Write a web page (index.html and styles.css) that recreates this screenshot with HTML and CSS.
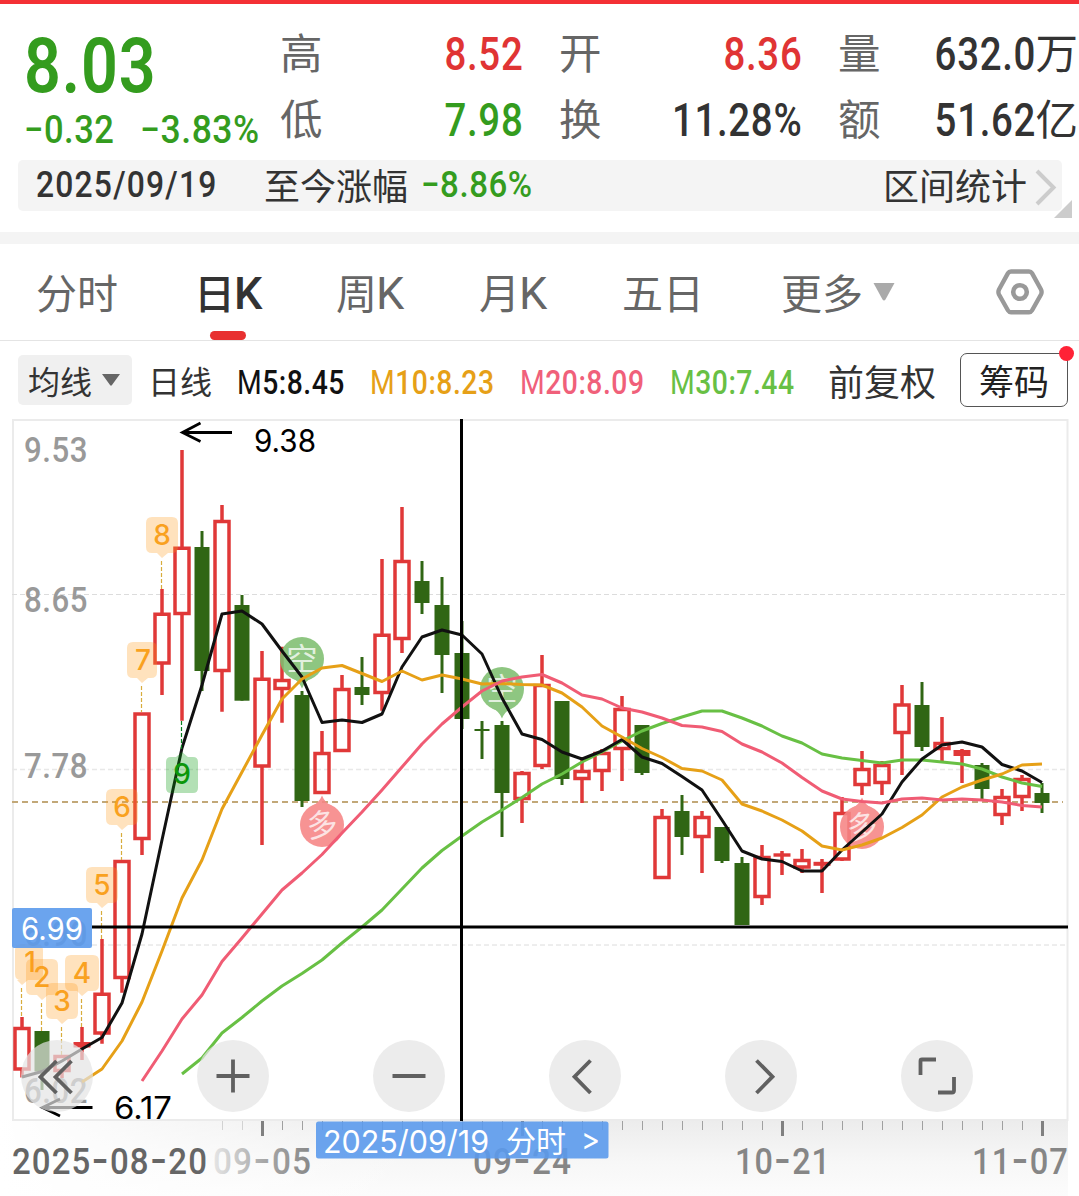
FILE: index.html
```html
<!DOCTYPE html>
<html lang="zh-CN">
<head>
<meta charset="utf-8">
<title>日K</title>
<link rel="stylesheet" href="styles.css">
</head>
<body>
<main class="page">
  <header class="quote">
    <div class="price">
      <div class="last"><span class="num s-last">8.03</span></div>
      <div class="change"><span class="cell c-diff"><span class="num s-diff">−0.32</span></span><span class="num s-pct">−3.83%</span></div>
    </div>
    <dl class="stats">
      <div class="stat"><dt>高</dt><dd class="up"><span class="num">8.52</span></dd></div>
      <div class="stat"><dt>开</dt><dd class="up"><span class="num">8.36</span></dd></div>
      <div class="stat last-col"><dt>量</dt><dd><span class="num">632.0</span><span class="unit">万</span></dd></div>
      <div class="stat"><dt>低</dt><dd class="down"><span class="num">7.98</span></dd></div>
      <div class="stat"><dt>换</dt><dd><span class="num">11.28%</span></dd></div>
      <div class="stat last-col"><dt>额</dt><dd><span class="num">51.62</span><span class="unit">亿</span></dd></div>
    </dl>
  </header>

  <section class="range">
    <span class="cell range-date"><span class="num s-date">2025/09/19</span></span>
    <span class="range-label">至今涨幅</span>
    <span class="num s-range down">−8.86%</span>
    <span class="range-link">区间统计</span>
    <svg class="range-chev" width="24" height="40" viewBox="0 0 24 40"><path d="M2 4 18.500 20.500 2 37" fill="none" stroke="#ccc" stroke-width="4"/></svg>
    <i class="corner"></i>
  </section>

  <nav class="tabs">
    <span class="tab t1">分时</span>
    <span class="tab t2 active">日<b>K</b></span>
    <span class="tab t3">周<b>K</b></span>
    <span class="tab t4">月<b>K</b></span>
    <span class="tab t5">五日</span>
    <span class="tab t6">更多<svg width="24" height="20" viewBox="0 0 24 20"><path d="M1.500 1h21L13.500 17.500q-1.500 2-3 0Z" fill="#aaa"/></svg></span>
    <svg class="gear" width="52" height="50" viewBox="0 0 52 50"><path d="M17 4.500H35Q37 4.500 38 6.200L47 22.500Q48.200 25 47 27.500L38 43.500Q37 45.200 35 45.200H17Q15 45.200 14 43.500L5 27.500Q3.800 25 5 22.500L14 6.200Q15 4.500 17 4.500Z" fill="none" stroke="#999" stroke-width="4.400"/><circle cx="26" cy="25" r="6.800" fill="none" stroke="#999" stroke-width="4.600"/></svg>
  </nav>

  <section class="legend">
    <span class="chip">均线<svg width="20" height="14" viewBox="0 0 20 14"><path d="M1 1h18L11 12q-1 1.500-2 0Z" fill="#666"/></svg></span>
    <span class="period">日线</span>
    <span class="cell ma m5"><span class="num"><i>M</i>5:8.45</span></span>
    <span class="cell ma m10"><span class="num"><i>M</i>10:8.23</span></span>
    <span class="cell ma m20"><span class="num"><i>M</i>20:8.09</span></span>
    <span class="cell ma m30"><span class="num"><i>M</i>30:7.44</span></span>
    <span class="adjust">前复权</span>
    <span class="chips-btn">筹码</span>
  </section>

  <section class="chart">
    <svg id="kline" width="1079" height="777" viewBox="0 419 1079 777">
      <defs>
        <linearGradient id="axisDown" x1="0" y1="0" x2="0" y2="1"><stop offset="0" stop-color="#ececec"/><stop offset=".55" stop-color="#f7f7f7"/><stop offset="1" stop-color="#fcfcfc"/></linearGradient>
        <linearGradient id="axisLeft" x1="0" y1="0" x2="1" y2="0"><stop offset="0" stop-color="#fff"/><stop offset=".25" stop-color="#fff" stop-opacity=".75"/><stop offset="1" stop-color="#fff" stop-opacity="0"/></linearGradient>
        <linearGradient id="dateFade" gradientUnits="userSpaceOnUse" x1="214" y1="0" x2="312" y2="0"><stop offset="0" stop-color="#e4e4e4"/><stop offset=".5" stop-color="#a8a8a8"/><stop offset="1" stop-color="#888"/></linearGradient>
      </defs>
      <rect x="0" y="1120" width="1068" height="76" fill="url(#axisDown)"/>
      <rect x="0" y="1120" width="420" height="76" fill="url(#axisLeft)"/>
      <rect x="13" y="420" width="1054.500" height="700" class="frame"/>
      <path d="M12 594.500H1066M12 945H1066" class="grid"/>
      <path d="M12 769.500H1066" class="grid faint"/>
      <path d="M12 802H1063" class="base"/>
      <g id="candles"></g>
      <g class="ylabels">
        <text x="24" y="462" textLength="64">9.53</text>
        <text x="24" y="612" textLength="64">8.65</text>
        <text x="24" y="778" textLength="64">7.78</text>
        <text x="24" y="946" textLength="64">6.90</text>
        <text x="24" y="1103" textLength="64">6.02</text>
      </g>
      <g id="signals"></g>
      <g id="averages"></g>
      <g id="counts"></g>
      <path d="M182 432.500H232M200.500 423 182.500 432.500 200.500 441.500" class="arrow"/>
      <text x="254" y="451.500" textLength="62" class="mark">9.38</text>
      <path d="M42 1107.500H92.500M60 1099 42.500 1107.500 60 1116" class="arrow"/>
      <text x="114" y="1118.500" textLength="58" class="mark">6.17</text>
      <g id="ticks"></g>
      <g class="dates">
        <text x="12" y="1174" textLength="196" class="first">2025<tspan class="dash">-</tspan>08<tspan class="dash">-</tspan>20</text>
        <text x="213" y="1174" textLength="99" fill="url(#dateFade)">09<tspan class="dash">-</tspan>05</text>
        <text x="473" y="1174" textLength="99">09<tspan class="dash">-</tspan>24</text>
        <text x="735" y="1174" textLength="96">10<tspan class="dash">-</tspan>21</text>
        <text x="972" y="1174" textLength="97">11<tspan class="dash">-</tspan>07</text>
      </g>
      <path d="M461.500 419V1121M92 927H1068" class="cross"/>
      <rect x="12" y="908" width="80" height="40" rx="2" class="tag"/>
      <text x="21" y="939.500" textLength="62" class="tagtext">6.99</text>
      <rect x="316" y="1121.500" width="292.500" height="37" rx="2.500" class="tag"/>
      <text x="323" y="1152.500" textLength="166" class="tagtext">2025/09/19</text>
      <text x="506" y="1152" textLength="60" class="tagtext cjk">分时</text>
      <text x="581" y="1150" textLength="19" class="tagtext">&gt;</text>
    </svg>
    <div class="controls">
      <svg viewBox="0 0 72 72"><path d="M35.500 21 19.500 37 35.500 53M50.500 21 34.500 37 50.500 53"/></svg>
      <svg viewBox="0 0 72 72"><path d="M19.500 36H52.500M36 19.500V52.500"/></svg>
      <svg viewBox="0 0 72 72"><path d="M19.500 36H52.500"/></svg>
      <svg viewBox="0 0 72 72"><path d="M41.500 20.500 25.500 36.700 41.500 53"/></svg>
      <svg viewBox="0 0 72 72"><path d="M31.500 20.500 47.500 36.700 31.500 53"/></svg>
      <svg viewBox="0 0 72 72"><path d="M19.500 35V21Q19.500 19.500 21 19.500H35M37 52.500H51Q53 52.500 53 50.500V37"/></svg>
    </div>
  </section>
</main>
<script src="chart.js"></script>
</body>
</html>
```
FILE: styles.css
```css
* { box-sizing: border-box; margin: 0; padding: 0; }
html, body { background: #fff; overflow: hidden; }
body { font-family: "Noto Sans CJK SC", sans-serif; color: #333; }
i, b { font-style: normal; font-weight: inherit; }
svg { display: block; flex: none; }
.page { width: 1079px; height: 1196px; border-top: 4px solid #f43035; overflow: hidden; }
.num { display: inline-block; font-family: Roboto, sans-serif; font-weight: 500; white-space: nowrap; transform-origin: 0 50%; }
.cell { display: flex; flex: none; white-space: nowrap; }
.up { color: #e03434; }
.down { color: #349c1e; }

.quote { display: flex; height: 156px; padding-top: 17px; }
.price { width: 280px; padding-left: 24px; color: #349c1e; white-space: nowrap; }
.last { display: flex; height: 87px; line-height: 90px; font-size: 76px; }
.change { display: flex; height: 42px; line-height: 44px; font-size: 39px; }
.c-diff { width: 116px; }
.s-last { font-weight: 600; letter-spacing: 1px; transform: scaleX(.85); }
.s-diff { letter-spacing: .6px; transform: scaleX(.885); }
.s-pct { letter-spacing: .6px; transform: scaleX(.91); }
.stats { display: grid; grid-template-columns: 279px 279px 241px; grid-auto-rows: 66px; }
.stat { display: flex; justify-content: space-between; width: 242px; height: 60px; line-height: 60px; font-size: 42.5px; white-space: nowrap; }
.stat dt { color: #666; }
.stat dd { display: flex; }
.stat .num { font-size: 45.5px; line-height: 67px; letter-spacing: .8px; margin-right: -1px; transform: scaleX(.845); transform-origin: 100% 50%; }
.stat.last-col { width: 240px; }

.range { position: relative; display: flex; align-items: center; height: 51px; margin: 0 17px 21px 18px; padding-left: 18px; border-radius: 5px; background: #f4f4f4; font-size: 36px; line-height: 48px; }
.range-date { width: 228px; font-size: 37px; margin-top: -2px; }
.s-date { letter-spacing: 1.4px; transform: scaleX(.86); }
.range-label { width: 157px; margin-top: -3px; }
.s-range { font-size: 36.5px; margin-top: -1px; letter-spacing: .6px; transform: scaleX(.905); }
.range-link { margin: -3px 0 0 auto; }
.range-chev { margin: 2px 3px 0 8px; }
.corner { position: absolute; right: -10px; bottom: -7px; border: 9px solid transparent; border-right-color: #ccc; border-bottom-color: #ccc; }

.tabs { display: flex; align-items: center; height: 109px; border-top: 12px solid #f4f4f4; border-bottom: 1px solid #e4e4e4; padding-left: 36px; font-size: 41px; line-height: 90px; color: #666; white-space: nowrap; }
.tab { position: relative; display: flex; flex: none; align-items: center; height: 96px; padding-bottom: 3px; }
.tab b { font-family: Roboto, sans-serif; font-size: 45px; margin: 6px 0 0 -1px; }
.t1 { width: 158px; } .t2 { width: 142px; } .t3 { width: 143px; } .t4 { width: 143px; } .t5 { width: 159px; } .t6 { width: 213px; }
.tab svg { margin: 3px 0 0 9px; }
.active { color: #333; font-weight: 500; }
.active::after { content: ""; position: absolute; left: 16px; bottom: 0; width: 36px; height: 9px; border-radius: 4.5px; background: #e83030; }

.legend { display: flex; align-items: center; height: 78px; padding-left: 18px; font-size: 32px; line-height: 46px; white-space: nowrap; }
.chip { display: flex; align-items: center; gap: 9px; width: 114px; height: 50px; padding-left: 10px; border-radius: 5px; background: #f0f0f0; }
.period { width: 89px; padding-left: 16px; }
.ma { font-size: 33px; padding: 5px 0 0 1px; }
.ma .num { letter-spacing: .6px; transform: scaleX(.857); }
.ma i { font-weight: 400; }
.m5 { width: 133px; margin-left: 15px; color: #111; }
.m10 { width: 150px; color: #e6a017; }
.m20 { width: 150px; color: #f0607a; }
.m30 { width: 159px; color: #68c044; }
.adjust { width: 132px; font-size: 36px; }
.chips-btn { position: relative; width: 108px; height: 54px; border: 1.5px solid #555; border-radius: 7px; font-size: 35px; line-height: 52px; text-align: center; color: #222; }
.chips-btn::after { content: ""; position: absolute; top: -8px; right: -7px; width: 15px; height: 15px; border-radius: 50%; background: #ff2236; }

.chart { position: relative; height: 777px; }
.controls { position: absolute; left: 21px; top: 621px; display: flex; gap: 104px; }
.controls svg { width: 72px; height: 72px; border-radius: 50%; background: rgba(228, 228, 228, .7); fill: none; stroke: #606060; stroke-width: 3.8; }
.frame { fill: none; stroke: #ebebeb; stroke-width: 2; }
.grid { fill: none; stroke: #dcdcdc; stroke-width: 1; stroke-dasharray: 5 3; }
.faint { stroke: #e8e8e8; stroke-width: 1.5; }
.base { fill: none; stroke: #c2a878; stroke-width: 2; stroke-dasharray: 6 4; }
.ylabels text { font: 500 35.5px Roboto, sans-serif; letter-spacing: .6px; fill: #999; }
text { white-space: pre; }
.mark { font: 400 30.5px Inter, sans-serif; fill: #000; }
.tagtext { font: 400 31px Inter, sans-serif; fill: #fff; }
.tagtext.cjk { font: 400 30px "Noto Sans CJK SC", sans-serif; }
.dates text { font: 500 36.5px Roboto, sans-serif; letter-spacing: 1.2px; }
.dates { fill: #868686; }
.dates .first { fill: #666; }
.dates .dash { font-family: Inter, sans-serif; font-size: 42px; baseline-shift: 0; }
.arrow { fill: none; stroke: #000; stroke-width: 2.8; }
.cross { fill: none; stroke: #000; stroke-width: 3; }
.tag { fill: #5b9aec; fill-opacity: .9; }
.tick { stroke: #a0a0a0; stroke-width: 1; }
.tick.major { stroke: #808080; stroke-width: 3; }
.rise { fill: none; stroke: #e03838; stroke-width: 3.5; }
.fall { fill: #306614; stroke: none; }
.fall-wick { stroke: #306614; stroke-width: 3; }
.avg { fill: none; stroke-width: 3; stroke-linejoin: round; }
.count { fill: #ff9c1c; fill-opacity: .29; }
.count-num { font: 500 28px Inter, sans-serif; fill: #f9a11f; text-anchor: middle; }
.count.green { fill: #0a9c10; fill-opacity: .31; }
.count-num.green { fill: #0a960a; }
.pole { fill: none; stroke: #d8ac3c; stroke-width: 1.2; stroke-dasharray: 4 2; }
.pole.green { stroke: #0a8020; }
.sig text { font: 400 31px "Noto Sans CJK SC", sans-serif; fill: #fff; fill-opacity: .75; text-anchor: middle; }
.sig { opacity: .88; }
.sig .short { fill: #7fbf70; }
.sig .long { fill: #f68585; }
```
FILE: chart.js
```js
const NS = 'http://www.w3.org/2000/svg';
const STEP = 20, FIRST = 22;

function add(parent, tag, attrs, text) {
  const el = document.createElementNS(NS, tag);
  for (const k in attrs) el.setAttribute(k, attrs[k]);
  if (text) el.textContent = text;
  parent.appendChild(el);
  return el;
}
const layer = id => document.getElementById(id);

// direction, high, body top, body bottom, low (chart units)
const candles = [
  ['r',1017,1027,1070.5,1077.5],['g',1031,1031,1071.5,1090],['r',1055,1055,1072,1078],['r',1027,1042,1047.5,1060],
  ['r',939,992.7,1034.7,1043.7],['r',860,860,979,992.7],['r',712.3,712.3,840,855],['r',589,612.7,664.7,695],
  ['r',450,546.7,615,720.7],['g',531,547,671,691],['r',505,520,672,711.7],['g',595,605,700.7,700.7],
  ['r',651,677.7,767.7,845],['r',646.7,679,690,722.7],['g',691,695,801,807],['r',731,752,794,794],
  ['r',675,688,752,752],['g',657,687,695,705],['r',559,633.7,694,710.7],['r',507,560,640,653],
  ['g',561,581,603,614],['g',577,605,655,693],['g',621,653,719,729],['g',721,729,731,759],
  ['g',721,725,793,837],['r',771,772,800,823],['r',655,684,767,769],['g',701,701,779,785],
  ['r',757,770,780,803],['r',749,752,772,791],['r',696,708,750,781],['g',725,725,773,775],
  ['r',809,816,879,879],['g',795,811,837,855],['r',811,816,838,873],['g',827,827,861,863],
  ['g',857,863,925,925],['r',845,856,898,905],['r',851,853.3,856.7,875],['r',849,859,868.5,873],
  ['r',859,861.8,865.8,893],['r',797,812,860.5,861],['r',751,768,786,795],['r',761,764,784,795],
  ['r',685,703.5,734,775],['g',682,705,747,751],['r',717,742,750,761],['r',749,750,756,783],
  ['g',763,765,789,799],['r',789,796,816,825],['r',775,778,798,811],['g',783,793,803,813]
];
candles.forEach(([dir, hi, top, bot, lo], i) => {
  const x = FIRST + STEP * i, g = layer('candles');
  if (dir === 'g') {
    add(g, 'path', { class: 'fall-wick', d: `M${x} ${hi}V${lo}` });
    add(g, 'rect', { class: 'fall', x: x - 7.5, y: top, width: 15, height: bot - top });
    return;
  }
  let d = `M${x} ${hi}V${top + 1}M${x} ${bot - 1}V${lo}`;
  if (bot - top < 7) {
    add(g, 'rect', { x: x - 8.5, y: top, width: 17, height: bot - top, fill: '#e03838' });
  } else {
    d += `M${x - 7} ${top + 1.6}H${x + 7}V${bot - 1.6}H${x - 7}Z`;
  }
  add(g, 'path', { class: 'rise', d });
});

// moving averages: colour, index of the first point, values
const averages = [
  ['#68c044', 8, [1074,1058,1033,1017.5,1001,986,973.5,960,943,927,910,889,868,850.5,836,822,810,797.5,784,774,762,752,741,731,723.5,717,711,711,718,726,736,743,754,758,760.5,763,760,760,762,764,769,777,783,786.5]],
  ['#111', 0, [1077,1071.5,1061,1049,1037.5,1003,934,840,748,685,614,611,624,651,677,722.5,720,722.5,714,667,637,630,635,654,698,734,739.5,752,759,751,739.5,757,763.5,776.5,790,820,851,859,861.5,871,871,850,832,814,782,759,745,742,747,764.5,771,782.5]],
  ['#e6a017', 3, [1082,1069,1041,1002,951,898,860,809,772,735,699,679,668,665.5,673.5,681.5,671,680,675,679,684,683.5,684.5,685,693,707,726,737,748.5,757.5,768.5,771,780,804,811,820,831,846,850,845,838,827.5,815,797,787,780,774,765,764]],
  ['#f05c74', 6, [1081,1051,1019,995,961.5,938,914,890,873,854.5,833,812,790,767,744,724,707,691,681,677,674.5,683,695,699,708,712,718,725.5,727,731.5,744,752,763,777.5,791,799,801.5,803,799,798,800,799,800,802,805.5,807]]
];
averages.forEach(([stroke, start, ys]) => {
  const points = ys.map((y, i) => `${FIRST + STEP * (start + i)},${y}`).join(' ');
  add(layer('averages'), 'polyline', { class: 'avg', stroke, points });
});

// sequence counts: digit, left, top, width, pole x, pole end
[
  [1, 15, 944, 28, 22, 1017, 30], [2, 26, 959, 32, 42, 1031, 42], [3, 46, 983, 32, 62, 1055, 62],
  [4, 65, 955, 34, 82, 1027, 82], [5, 86, 867, 32, 102, 939, 102], [6, 106, 789, 32, 122, 860, 122],
  [7, 127, 642, 30, 142, 712, 143], [8, 146, 517, 32, 162, 589, 162]
].forEach(([n, x, y, w, px, end, tx]) => {
  const g = layer('counts'), b = y + 36;
  add(g, 'path', { class: 'pole', d: `M${px - .5} ${b + 8}V${end}` });
  add(g, 'path', { class: 'count', d: `M${x + 6} ${y}H${x + w - 6}q6 0 6 6V${b - 6}q0 6-6 6H${px + 6}L${px} ${b + 5}L${px - 5} ${b}H${x + 6}q-6 0-6-6V${y + 6}q0-6 6-6Z` });
  add(g, 'text', { class: 'count-num', x: tx, y: y + 28 }, String(n));
});
add(layer('counts'), 'path', { class: 'pole green', d: 'M181.500 721V750' });
add(layer('counts'), 'path', { class: 'count green', d: 'M171 757H176L182 752L188 757H193q5 0 5 5V788q0 5-5 5H171q-5 0-5-5V762q0-5 5-5Z' });
add(layer('counts'), 'text', { class: 'count-num green', x: 182, y: 784 }, '9');

[['空', 302, 659], ['空', 502, 689], ['多', 322, 825], ['多', 862, 827]].forEach(([ch, x, y]) => {
  const down = ch === '空', s = down ? 1 : -1;
  const g = add(layer('signals'), 'g', { class: 'sig' });
  const cls = down ? 'short' : 'long';
  add(g, 'circle', { class: cls, cx: x, cy: y, r: 22 });
  add(g, 'path', { class: cls, d: `M${x - 10} ${y + s * 19}Q${x - 3} ${y + s * 22} ${x} ${y + s * 29.5}Q${x + 3} ${y + s * 22} ${x + 10} ${y + s * 19}Z` });
  const t = add(g, 'text', { x, y: y + 11 }, ch);
  if (!down) t.setAttribute('transform', `rotate(-8 ${x} ${y})`);
});

for (let x = 222; x <= 1042; x += STEP) {
  const major = (x - 262) % 260 === 0;
  add(layer('ticks'), 'path', {
    class: major ? 'tick major' : 'tick',
    d: major ? `M${x + .5} 1121V1136` : `M${x + .5} 1121V1130`,
    opacity: x < 250 ? .4 : 1
  });
}
document.querySelectorAll('#kline text[textLength]').forEach(t => t.setAttribute('lengthAdjust', 'spacingAndGlyphs'));
```
